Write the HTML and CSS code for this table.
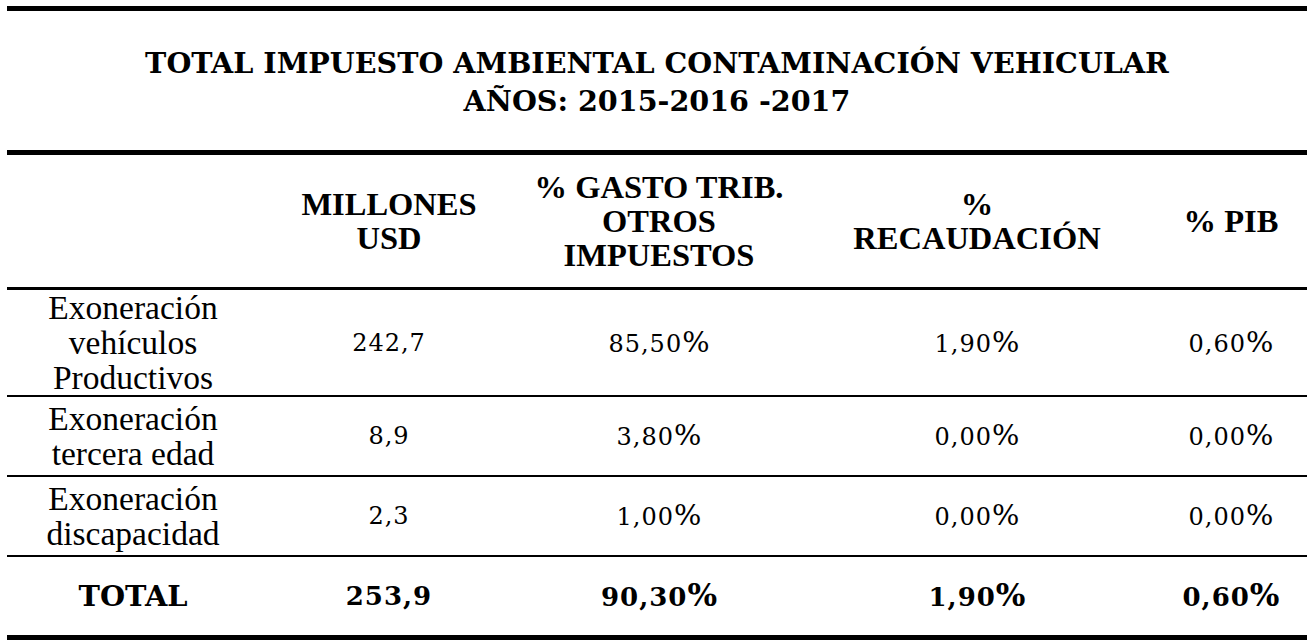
FILE: index.html
```html
<!DOCTYPE html>
<html lang="es">
<head>
<meta charset="utf-8">
<title>Total impuesto ambiental contaminación vehicular</title>
<link rel="stylesheet" href="styles.css">
</head>
<body>
<div class="sheet">
  <div class="title-block">
    <h1 class="title">TOTAL IMPUESTO AMBIENTAL CONTAMINACIÓN VEHICULAR<br>AÑOS: 2015-2016 -2017</h1>
  </div>
  <table class="data">
    <colgroup>
      <col class="c1"><col class="c2"><col class="c3"><col class="c4"><col class="c5">
    </colgroup>
    <thead>
      <tr class="head-row">
        <th></th>
        <th>MILLONES<br>USD</th>
        <th>% GASTO TRIB.<br>OTROS<br>IMPUESTOS</th>
        <th>%<br>RECAUDACIÓN</th>
        <th>% PIB</th>
      </tr>
    </thead>
    <tbody>
      <tr class="row row-tall">
        <td class="label">Exoneración<br>vehículos<br>Productivos</td>
        <td class="num">242,7</td>
        <td class="num">85,50<span class="pct">%</span></td>
        <td class="num">1,90<span class="pct">%</span></td>
        <td class="num">0,60<span class="pct">%</span></td>
      </tr>
      <tr class="row">
        <td class="label">Exoneración<br>tercera edad</td>
        <td class="num">8,9</td>
        <td class="num">3,80<span class="pct">%</span></td>
        <td class="num">0,00<span class="pct">%</span></td>
        <td class="num">0,00<span class="pct">%</span></td>
      </tr>
      <tr class="row">
        <td class="label">Exoneración<br>discapacidad</td>
        <td class="num">2,3</td>
        <td class="num">1,00<span class="pct">%</span></td>
        <td class="num">0,00<span class="pct">%</span></td>
        <td class="num">0,00<span class="pct">%</span></td>
      </tr>
      <tr class="total-row">
        <td class="total-label">TOTAL</td>
        <td class="total-num">253,9</td>
        <td class="total-num">90,30<span class="pct">%</span></td>
        <td class="total-num">1,90<span class="pct">%</span></td>
        <td class="total-num">0,60<span class="pct">%</span></td>
      </tr>
    </tbody>
  </table>
</div>
</body>
</html>
```

FILE: styles.css
```css
html, body {
  margin: 0;
  padding: 0;
  background: #ffffff;
  color: #000000;
}

.sheet {
  width: 1300px;
  margin: 6px 0 0 7px;
  border-top: 5px solid #000;
}

.title-block {
  height: 139px;
  display: flex;
  align-items: center;
  justify-content: center;
  padding-top: 2px;
  box-sizing: border-box;
}

.title {
  margin: 0;
  font-family: "DejaVu Serif", "Liberation Serif", serif;
  font-weight: bold;
  font-size: 28.6px;
  line-height: 38px;
  text-align: center;
}

.data {
  width: 1300px;
  border-collapse: collapse;
  table-layout: fixed;
  border-top: 5px solid #000;
  border-bottom: 5px solid #000;
}

.c1 { width: 252px; }
.c2 { width: 260px; }
.c3 { width: 280px; }
.c4 { width: 356px; }
.c5 { width: 152px; }

.data th,
.data td {
  padding: 0;
  text-align: center;
  vertical-align: middle;
}

.head-row th {
  height: 132px;
  border-bottom: 3px solid #000;
  font-family: "Liberation Serif", "Times New Roman", Times, "DejaVu Serif", serif;
  font-weight: bold;
  font-size: 32.5px;
  line-height: 34px;
}

.row td {
  height: 78px;
  border-bottom: 2px solid #000;
}

.row-tall td {
  height: 100px;
}

.label {
  font-family: "Liberation Serif", "Times New Roman", Times, "DejaVu Serif", serif;
  font-size: 33.5px;
  line-height: 35px;
}

.num {
  font-family: "DejaVu Serif", "Liberation Serif", serif;
  font-size: 24px;
  letter-spacing: 1px;
}

.num .pct {
  font-size: 1.2em;
  line-height: 1;
  letter-spacing: 0;
}

.total-row td {
  height: 78px;
}

.total-label {
  font-family: "DejaVu Serif", "Liberation Serif", serif;
  font-weight: bold;
  font-size: 28.8px;
}

.total-num {
  font-family: "DejaVu Serif", "Liberation Serif", serif;
  font-weight: bold;
  font-size: 26px;
  letter-spacing: 1px;
}

.total-num .pct {
  font-size: 1.2em;
  line-height: 1;
  letter-spacing: 0;
}
```
